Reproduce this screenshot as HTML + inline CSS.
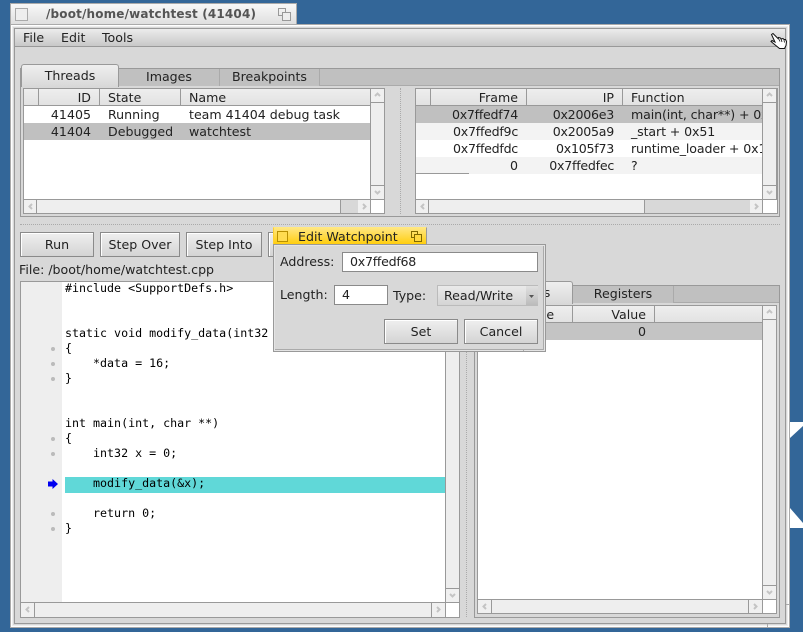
<!DOCTYPE html>
<html><head><meta charset="utf-8"><style>
html,body{margin:0;padding:0;width:803px;height:632px;overflow:hidden;background:#336698}
body{position:relative;font:12.6px/19px "DejaVu Sans",sans-serif;color:#222}
div,span{position:absolute;box-sizing:border-box;white-space:pre}
svg{position:absolute;overflow:visible}
.b{border:1px solid #999}
.hd{background:linear-gradient(#ececec,#e0e0e0);border-bottom:1px solid #999;}
.hc{top:0;height:16px;border-right:1px solid #999;background:linear-gradient(#eee,#e2e2e2)}
.r{text-align:right}
.x{letter-spacing:-.25px}
.f{letter-spacing:-.12px}
.sb{background:#eee;border:1px solid #999}
.ar{width:14px;height:14px;background:#f0f0f0;border:1px solid #999}
.btn{background:linear-gradient(#efefef,#d4d4d4);border:1px solid #8a8a8a;box-shadow:inset 1px 1px 0 #fff;text-align:center;height:25px;line-height:23px}
.tab{background:#c0c0c0;border-right:1px solid #aaa;text-align:center}
.m{font:11.65px/17px "DejaVu Sans Mono",monospace;color:#000;left:65px}
.dot{left:51px;width:4px;height:4px;border-radius:2px;background:#bbb}
.dv{width:1px;border-left:1px dotted #aaa}
.dh{height:1px;border-top:1px dotted #aaa}
.in{background:#fff;border:1px solid #8a8a8a}
</style></head><body>

<svg style="left:0;top:0" width="803" height="632"><polygon points="790,422 803,422 803,426 790,438" fill="#fff"/><polygon points="790,508 803,523 803,528 790,528" fill="#fff"/></svg>

<!-- title tab -->
<div style="left:10px;top:3px;width:287px;height:23px;background:linear-gradient(#f8f8f8,#dedede);border:1px solid #aaa"></div>
<div style="left:15px;top:8px;width:13px;height:13px;background:#eee;border:1px solid #aaa"></div>
<div style="left:46px;top:6px;font:bold 12px/17px 'DejaVu Sans',sans-serif;color:#555;letter-spacing:.16px">/boot/home/watchtest (41404)</div>
<div style="left:278px;top:8px;width:8px;height:8px;border:1px solid #999"></div>
<div style="left:282px;top:12px;width:9px;height:9px;border:1px solid #999;background:#eee"></div>

<!-- window frame -->
<div style="left:10px;top:24px;width:780px;height:604px;background:#d8d8d8;border:1px solid #aaa;box-shadow:inset 1px 1px 0 #fff,inset -1px -1px 0 #fff,inset 2px 2px 0 #eee,inset -2px -2px 0 #eee"></div>
<div style="left:14px;top:28px;width:772px;height:596px;border:1px solid #999;background:#d8d8d8"></div>
<div style="left:786px;top:604px;width:3px;height:1px;background:#aaa"></div>
<div style="left:767px;top:624px;width:1px;height:3px;background:#aaa"></div>
<div style="left:15px;top:29px;width:770px;height:18px;background:linear-gradient(#ececec,#c8c8c8);border-bottom:1px solid #999"></div>
<div style="left:23px;top:28px">File</div><div style="left:61px;top:28px">Edit</div><div style="left:102px;top:28px">Tools</div>

<!-- top tab view -->
<div style="left:20px;top:68px;width:760px;height:149px;border:1px solid #999;background:#d8d8d8"></div>
<div style="left:21px;top:69px;width:758px;height:17px;background:#c0c0c0;border-bottom:1px solid #aaa"></div>
<div class="tab" style="left:119px;top:69px;width:101px;height:17px;line-height:16px">Images</div>
<div class="tab" style="left:220px;top:69px;width:100px;height:17px;line-height:16px">Breakpoints</div>
<div style="left:21px;top:64px;width:98px;height:23px;background:linear-gradient(#efefef,#d8d8d8);border:1px solid #999;border-bottom:none;border-radius:3px 3px 0 0;text-align:center;line-height:22px">Threads</div>

<!-- threads list -->
<div class="b" style="left:23px;top:88px;width:362px;height:126px;background:#fff"></div>
<div class="hd" style="left:24px;top:89px;width:347px;height:17px"></div>
<div class="hc" style="left:24px;top:89px;width:15px"></div>
<div class="hc" style="left:39px;top:89px;width:61px"></div>
<div class="hc" style="left:100px;top:89px;width:81px"></div>
<div class="hc" style="left:181px;top:89px;width:190px"></div>
<div class="r" style="left:39px;top:88px;width:52px">ID</div>
<div style="left:108px;top:88px">State</div><div style="left:189px;top:88px">Name</div>
<div style="left:24px;top:123px;width:347px;height:17px;background:#c0c0c0"></div>
<div class="r" style="left:39px;top:105px;width:52px">41405</div><div style="left:108px;top:105px">Running</div><div style="left:189px;top:105px">team 41404 debug task</div>
<div class="r" style="left:39px;top:122px;width:52px">41404</div><div style="left:108px;top:122px">Debugged</div><div style="left:189px;top:122px">watchtest</div>
<div class="sb" style="left:370px;top:88px;width:15px;height:112px"></div>
<div class="ar" style="left:370px;top:88px;height:15px;width:15px"><svg width="13" height="13"><path d="M4 7l2.500-2.500L9 7" fill="none" stroke="#c4c4c4" stroke-width="2"/></svg></div>
<div class="ar" style="left:370px;top:185px;height:15px;width:15px"><svg width="13" height="13"><path d="M4 5l2.500 2.500L9 5" fill="none" stroke="#c4c4c4" stroke-width="2"/></svg></div>
<div class="sb" style="left:23px;top:199px;width:348px;height:15px"></div>
<div class="ar" style="left:23px;top:199px;height:15px"><svg width="13" height="13"><path d="M8 4L5.500 6.500 8 9" fill="none" stroke="#c4c4c4" stroke-width="2"/></svg></div>
<div class="ar" style="left:357px;top:199px;height:15px"><svg width="13" height="13"><path d="M5 4l2.500 2.500L5 9" fill="none" stroke="#c4c4c4" stroke-width="2"/></svg></div>
<div style="left:340px;top:199px;width:18px;height:15px;background:#d8d8d8;border:1px solid #999;border-right:none"></div>

<div class="dv" style="left:400px;top:88px;height:126px"></div>

<!-- stack list -->
<div class="b" style="left:415px;top:88px;width:363px;height:126px;background:#fff"></div>
<div class="hc" style="left:416px;top:89px;width:15px"></div>
<div class="hc" style="left:431px;top:89px;width:96px"></div>
<div class="hc" style="left:527px;top:89px;width:96px"></div>
<div class="hc" style="left:623px;top:89px;width:140px;border-right:none"></div>
<div style="left:416px;top:105px;width:347px;height:1px;background:#999"></div>
<div style="left:416px;top:106px;width:347px;height:17px;background:#c0c0c0"></div>
<div style="left:416px;top:123px;width:347px;height:17px;background:#f3f3f3"></div>
<div style="left:416px;top:157px;width:347px;height:17px;background:#f3f3f3"></div>
<div style="left:416px;top:173px;width:53px;height:1px;background:#999"></div>
<div class="r" style="left:431px;top:88px;width:87px">Frame</div><div class="r" style="left:527px;top:88px;width:87px">IP</div><div style="left:631px;top:88px">Function</div>
<div class="r x" style="left:431px;top:105px;width:87px">0x7ffedf74</div><div class="r x" style="left:527px;top:105px;width:87px">0x2006e3</div><div class="f" style="left:631px;top:105px;width:132px;overflow:hidden">main(int, char**) + 0x1f</div>
<div class="r x" style="left:431px;top:122px;width:87px">0x7ffedf9c</div><div class="r x" style="left:527px;top:122px;width:87px">0x2005a9</div><div class="f" style="left:631px;top:122px">_start + 0x51</div>
<div class="r x" style="left:431px;top:139px;width:87px">0x7ffedfdc</div><div class="r x" style="left:527px;top:139px;width:87px">0x105f73</div><div class="f" style="left:631px;top:139px;width:132px;overflow:hidden">runtime_loader + 0x1a3</div>
<div class="r" style="left:431px;top:156px;width:87px">0</div><div class="r x" style="left:527px;top:156px;width:87px">0x7ffedfec</div><div style="left:631px;top:156px">?</div>
<div class="sb" style="left:762px;top:88px;width:15px;height:112px"></div>
<div class="ar" style="left:762px;top:88px;height:15px;width:15px"><svg width="13" height="13"><path d="M4 7l2.500-2.500L9 7" fill="none" stroke="#c4c4c4" stroke-width="2"/></svg></div>
<div class="ar" style="left:762px;top:185px;height:15px;width:15px"><svg width="13" height="13"><path d="M4 5l2.500 2.500L9 5" fill="none" stroke="#c4c4c4" stroke-width="2"/></svg></div>
<div class="sb" style="left:415px;top:199px;width:348px;height:15px"></div>
<div class="ar" style="left:415px;top:199px;height:15px"><svg width="13" height="13"><path d="M8 4L5.500 6.500 8 9" fill="none" stroke="#c4c4c4" stroke-width="2"/></svg></div>
<div class="ar" style="left:749px;top:199px;height:15px"><svg width="13" height="13"><path d="M5 4l2.500 2.500L5 9" fill="none" stroke="#c4c4c4" stroke-width="2"/></svg></div>
<div style="left:644px;top:199px;width:106px;height:15px;background:#d8d8d8;border:1px solid #999;border-right:none"></div>

<div class="dh" style="left:20px;top:224px;width:760px"></div>

<!-- buttons -->
<div class="btn" style="left:20px;top:232px;width:74px">Run</div>
<div class="btn" style="left:100px;top:232px;width:80px">Step Over</div>
<div class="btn" style="left:186px;top:232px;width:76px">Step Into</div>
<div class="btn" style="left:268px;top:232px;width:76px"></div>
<div style="left:19px;top:260px">File: /boot/home/watchtest.cpp</div>

<!-- source view -->
<div class="b" style="left:20px;top:281px;width:440px;height:337px;background:#fff"></div>
<div style="left:21px;top:282px;width:41px;height:320px;background:#eee"></div>
<div style="left:65px;top:477px;width:380px;height:16px;background:#60d8d8"></div>
<div class="m" style="top:280px">#include &lt;SupportDefs.h&gt;</div>
<div class="m" style="top:325px">static void modify_data(int32</div>
<div class="m" style="top:340px">{</div>
<div class="m" style="top:355px">    *data = 16;</div>
<div class="m" style="top:370px">}</div>
<div class="m" style="top:415px">int main(int, char **)</div>
<div class="m" style="top:430px">{</div>
<div class="m" style="top:445px">    int32 x = 0;</div>
<div class="m" style="top:475px">    modify_data(&amp;x);</div>
<div class="m" style="top:505px">    return 0;</div>
<div class="m" style="top:520px">}</div>
<div class="dot" style="top:347px"></div><div class="dot" style="top:362px"></div><div class="dot" style="top:377px"></div>
<div class="dot" style="top:437px"></div><div class="dot" style="top:452px"></div><div class="dot" style="top:512px"></div><div class="dot" style="top:527px"></div>
<svg style="left:48px;top:479px" width="10" height="10"><path d="M0 2.500h4.500V0L10 5 4.500 10V7.500H0z" fill="#0000f0"/></svg>
<div class="sb" style="left:445px;top:281px;width:15px;height:322px"></div>
<div class="ar" style="left:445px;top:588px;height:15px;width:15px"><svg width="13" height="13"><path d="M4 5l2.500 2.500L9 5" fill="none" stroke="#c4c4c4" stroke-width="2"/></svg></div>
<div class="sb" style="left:20px;top:602px;width:426px;height:16px"></div>
<div class="ar" style="left:20px;top:602px;height:16px;width:15px"><svg width="13" height="13"><path d="M8 4L5.500 6.500 8 9" fill="none" stroke="#c4c4c4" stroke-width="2"/></svg></div>
<div class="ar" style="left:431px;top:602px;height:16px;width:15px"><svg width="13" height="13"><path d="M5 4l2.500 2.500L5 9" fill="none" stroke="#c4c4c4" stroke-width="2"/></svg></div>

<div class="dv" style="left:466px;top:281px;height:336px"></div>

<!-- right tab view -->
<div style="left:474px;top:285px;width:306px;height:333px;border:1px solid #999;background:#d8d8d8"></div>
<div style="left:475px;top:286px;width:304px;height:17px;background:#c0c0c0;border-bottom:1px solid #aaa"></div>
<div class="tab" style="left:573px;top:286px;width:101px;height:17px;line-height:16px">Registers</div>
<div style="left:475px;top:281px;width:98px;height:23px;background:linear-gradient(#efefef,#d8d8d8);border:1px solid #999;border-bottom:none;border-radius:3px 3px 0 0;text-align:center;line-height:22px;padding-right:5px">Variables</div>
<div class="b" style="left:477px;top:305px;width:300px;height:309px;background:#fff"></div>
<div class="hc" style="left:478px;top:306px;width:95px"></div>
<div class="hc" style="left:573px;top:306px;width:82px"></div>
<div class="hc" style="left:655px;top:306px;width:107px;border-right:none"></div>
<div style="left:478px;top:322px;width:284px;height:1px;background:#999"></div>
<div style="left:478px;top:323px;width:284px;height:17px;background:#c4c4c4"></div>
<div style="left:517px;top:305px">Name</div>
<div class="r" style="left:573px;top:305px;width:73px">Value</div>
<div class="r" style="left:573px;top:322px;width:73px">0</div>
<div class="sb" style="left:762px;top:305px;width:15px;height:295px"></div>
<div class="ar" style="left:762px;top:305px;height:15px;width:15px"><svg width="13" height="13"><path d="M4 7l2.500-2.500L9 7" fill="none" stroke="#c4c4c4" stroke-width="2"/></svg></div>
<div class="ar" style="left:762px;top:585px;height:15px;width:15px"><svg width="13" height="13"><path d="M4 5l2.500 2.500L9 5" fill="none" stroke="#c4c4c4" stroke-width="2"/></svg></div>
<div class="sb" style="left:477px;top:599px;width:286px;height:15px"></div>
<div class="ar" style="left:477px;top:599px;height:15px;width:15px"><svg width="13" height="13"><path d="M8 4L5.500 6.500 8 9" fill="none" stroke="#c4c4c4" stroke-width="2"/></svg></div>
<div class="ar" style="left:748px;top:599px;height:15px;width:15px"><svg width="13" height="13"><path d="M5 4l2.500 2.500L5 9" fill="none" stroke="#c4c4c4" stroke-width="2"/></svg></div>

<!-- dialog -->
<div style="left:273px;top:227px;width:154px;height:19px;background:linear-gradient(#ffe680,#ffcb00);border-top:1px solid #ffe880;border-left:1px solid #ffd030;border-right:1px solid #999"></div>
<div style="left:277px;top:231px;width:11px;height:11px;background:#ffdc50;border:1px solid #b89000"></div>
<div style="left:298px;top:227px;color:#222">Edit Watchpoint</div>
<div style="left:411px;top:231px;width:7px;height:7px;border:1px solid #806800"></div>
<div style="left:414px;top:234px;width:8px;height:8px;border:1px solid #806800;background:#ffd840"></div>
<div style="left:273px;top:244px;width:273px;height:108px;background:#d8d8d8;border:1px solid #999;box-shadow:inset 0 0 0 1px #e4e4e4"></div>
<div style="left:275px;top:246px;width:269px;height:104px;border-right:1px solid #aaa;border-bottom:1px solid #aaa"></div>
<div style="left:523px;top:350px;width:1px;height:1px;background:#aaa"></div>
<div style="left:280px;top:252px">Address:</div>
<div class="in x" style="left:342px;top:252px;width:196px;height:20px;line-height:18px;padding-left:7px">0x7ffedf68</div>
<div style="left:280px;top:285px">Length:</div>
<div class="in" style="left:334px;top:285px;width:54px;height:20px;line-height:18px;padding-left:7px">4</div>
<div style="left:393px;top:286px">Type:</div>
<div style="left:437px;top:285px;width:101px;height:21px;background:linear-gradient(#eaeaea,#d4d4d4);border:1px solid #bbb;line-height:20px;padding-left:6px">Read/Write</div>
<div style="left:526px;top:286px;width:12px;height:19px;background:linear-gradient(#e0e0e0,#bbb)"></div>
<svg style="left:529px;top:295px" width="6" height="3"><path d="M0 0h5L2.500 3z" fill="#555"/></svg>
<div class="btn" style="left:384px;top:319px;width:74px">Set</div>
<div class="btn" style="left:464px;top:319px;width:74px">Cancel</div>

<!-- cursor -->
<svg style="left:770px;top:32px" width="18" height="18"><path d="M1.500 2.500L3 1.500l5 5 .5-1 2 .5 .5 1 2-.5 1 1 1.500 0 1 2-.5 4-1.500 3h-5L4 12 1 9.500l1-1 3 1.500L1.500 2.500z" fill="#fff" stroke="#111" stroke-width="1"/><path d="M8.500 6.500l1.500 3M11 7l1 3M14 8l.5 2.500" stroke="#111" stroke-width=".8" fill="none"/></svg>
</body></html>
